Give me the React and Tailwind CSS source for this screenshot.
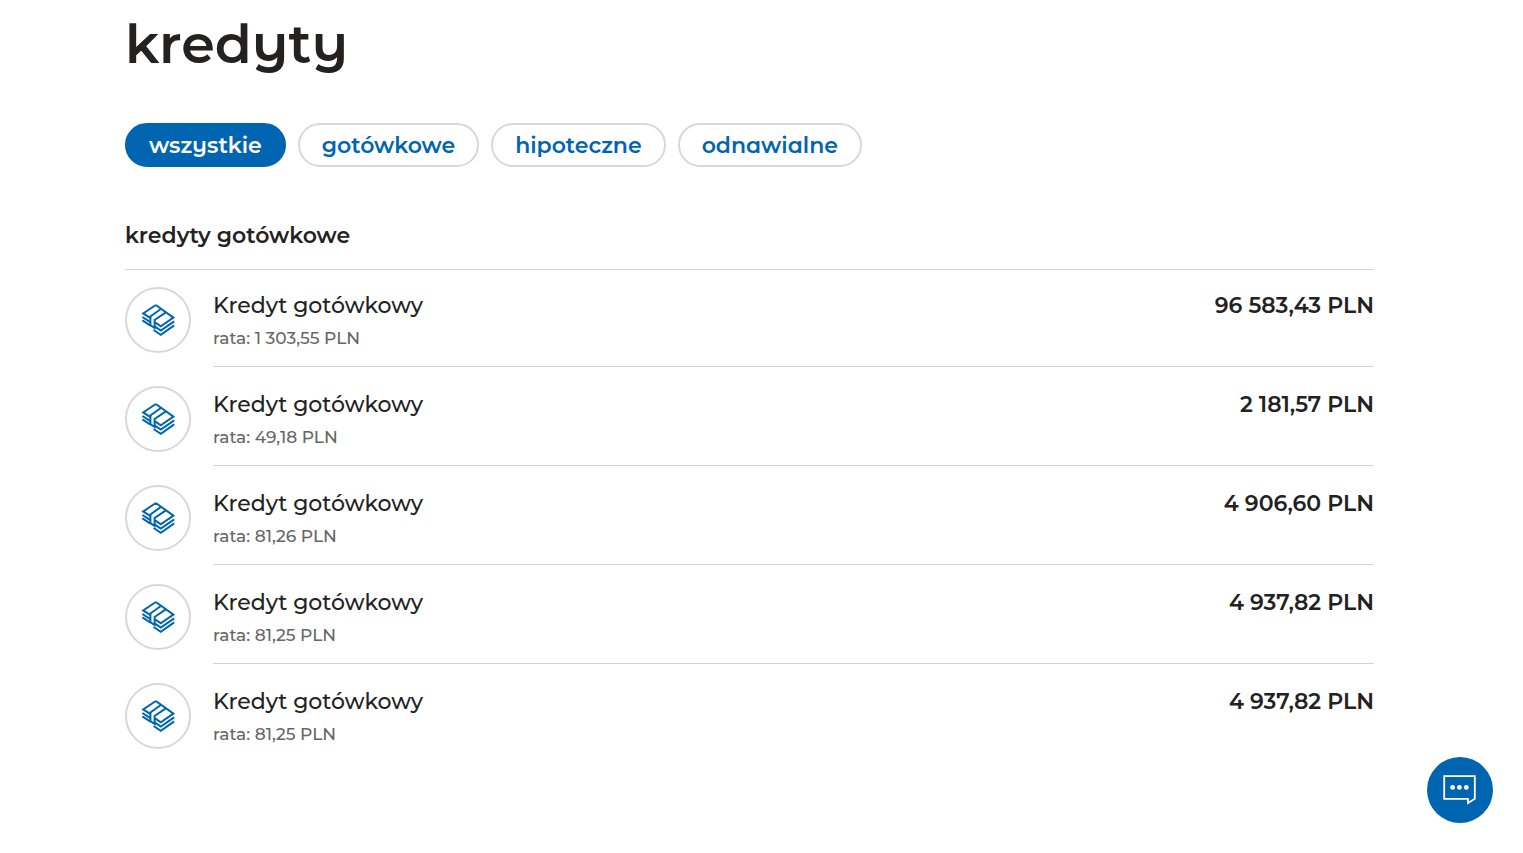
import { useState } from "react";
import clsx from "clsx";

const filters = ["wszystkie", "gotówkowe", "hipoteczne", "odnawialne"];

const loans = [
  { id: 1, name: "Kredyt gotówkowy", installment: "1 303,55 PLN", amount: "96 583,43 PLN" },
  { id: 2, name: "Kredyt gotówkowy", installment: "49,18 PLN", amount: "2 181,57 PLN" },
  { id: 3, name: "Kredyt gotówkowy", installment: "81,26 PLN", amount: "4 906,60 PLN" },
  { id: 4, name: "Kredyt gotówkowy", installment: "81,25 PLN", amount: "4 937,82 PLN" },
  { id: 5, name: "Kredyt gotówkowy", installment: "81,25 PLN", amount: "4 937,82 PLN" },
];

// brand lettering: round "y" and single-storey "a", the rest is plain Montserrat
function BrandText({ children }) {
  return children.split(/([ya])/).map((part, i) =>
    i % 2 ? (
      <span key={i} className="font-['Montserrat_Alternates','Montserrat',sans-serif]">
        {part}
      </span>
    ) : (
      part
    )
  );
}

function CashIcon() {
  return (
    <svg
      width="34"
      height="34"
      viewBox="0 0 34 34"
      fill="none"
      stroke="currentColor"
      strokeWidth="2"
      aria-hidden="true"
    >
      {/* top face */}
      <path d="M14.8 2 32.4 14.6 19.8 23.4 14 19.4 M14.8 2 2.2 10.4 9.9 15.4" />
      {/* band */}
      <path d="M20.2 5.8 9.4 13.4V22.2L13.6 25V17L25.2 9.2" />
      {/* notes below */}
      <path d="M1.4 14 9.4 19.2 M1.4 17.4 9.4 22.6" />
      <path d="M33.2 18.4 19.8 27.6 13.6 23.4 M33.2 22.4 19.8 31.8 12.6 27" />
    </svg>
  );
}

function ChatIcon() {
  return (
    <svg width="34" height="34" viewBox="0 0 34 34" fill="none" stroke="currentColor" aria-hidden="true">
      <path d="M1.2 3.2H31.8V25.8L25 30.2V25.8H1.2Z" strokeWidth="1.8" />
      <g fill="currentColor" stroke="none">
        <circle cx="9.6" cy="14.4" r="2.4" />
        <circle cx="16.4" cy="14.4" r="2.4" />
        <circle cx="23.3" cy="14.4" r="2.4" />
      </g>
    </svg>
  );
}

function LoanRow({ loan }) {
  return (
    <li className="group flex gap-[22px]">
      <div className="flex pt-[19px] group-first:pt-[17px]">
        <span className="flex size-[66px] shrink-0 items-center justify-center rounded-full border-2 border-[#d8d8d8] text-[#0065b1]">
          <CashIcon />
        </span>
      </div>
      <div className="flex flex-1 justify-between gap-6 border-b border-[#d4d4d4] pt-[22px] pb-[15px] text-[22px] leading-8 group-first:pt-5 group-last:border-b-0">
        <div>
          <h3 className="font-medium text-[#222]">{loan.name}</h3>
          <p className="pt-1 text-[17px] leading-[25px] font-medium text-[#666]">
            rata: {loan.installment}
          </p>
        </div>
        <p className="font-semibold whitespace-nowrap text-[#222]">{loan.amount}</p>
      </div>
    </li>
  );
}

export default function App() {
  const [active, setActive] = useState("wszystkie");

  return (
    <div className="min-h-screen bg-white font-['Montserrat','Inter',sans-serif] text-[#25211e]">
      <main className="pt-2 pr-[149px] pb-10 pl-[125px]">
        <h1 className="text-[54px] leading-[72px] font-semibold">
          <BrandText>kredyty</BrandText>
        </h1>

        {/* filters */}
        <div className="mt-[43px] flex flex-wrap gap-3">
          {filters.map((f) => (
            <button
              key={f}
              type="button"
              aria-pressed={active === f}
              onClick={() => setActive(f)}
              className={clsx(
                "h-11 rounded-full border-2 px-[22px] pt-px text-[22px] leading-8 font-semibold",
                active === f
                  ? "border-[#0065b1] bg-[#0065b1] text-white"
                  : "border-[#d8d8d8] bg-white text-[#0065b1]"
              )}
            >
              <BrandText>{f}</BrandText>
            </button>
          ))}
        </div>

        {/* cash loans */}
        <section className="mt-[53px]">
          <h2 className="border-b border-[#d4d4d4] pb-[17px] text-[22px] leading-8 font-semibold">
            kredyty gotówkowe
          </h2>
          <ul>
            {loans.map((loan) => (
              <LoanRow key={loan.id} loan={loan} />
            ))}
          </ul>
        </section>
      </main>

      <button
        type="button"
        aria-label="Czat"
        className="fixed right-[30px] bottom-[30px] flex size-[66px] items-center justify-center rounded-full bg-[#0065b1] text-white"
      >
        <ChatIcon />
      </button>
    </div>
  );
}
